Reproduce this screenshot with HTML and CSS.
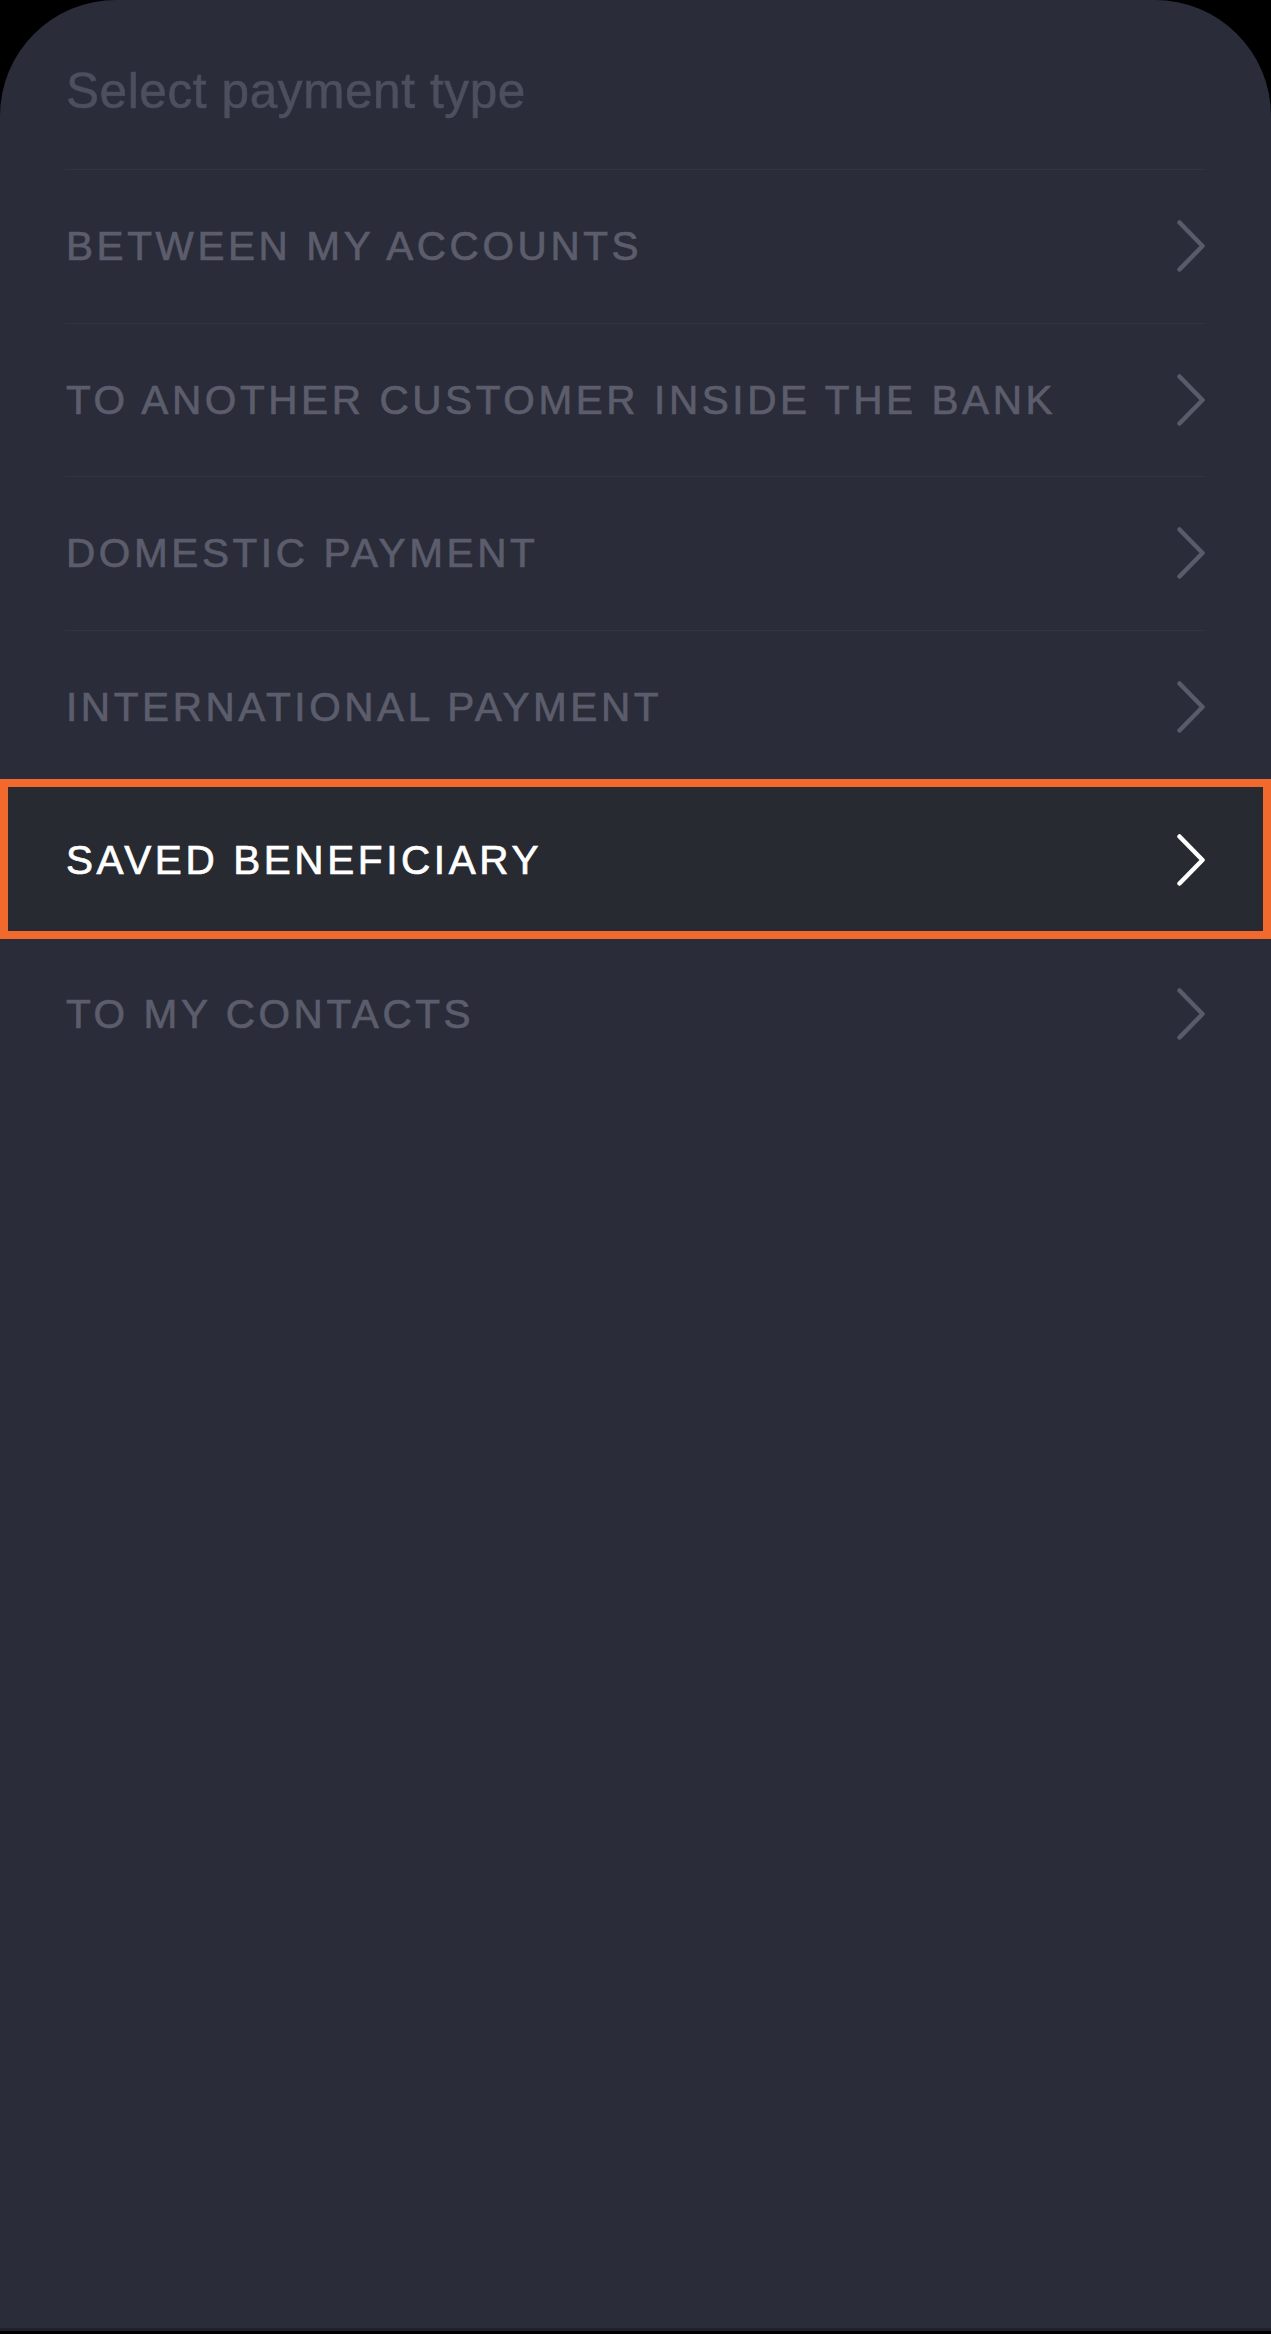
FILE: index.html
```html
<!DOCTYPE html>
<html lang="en">
<head>
<meta charset="utf-8">
<title>Select payment type</title>
<link rel="stylesheet" href="styles.css">
</head>
<body>
<main class="screen">
  <header class="sheet-header">
    <h1 class="sheet-title">Select payment type</h1>
  </header>
  <ul class="pay-list">
    <li class="pay-item">
      <span class="pay-label">BETWEEN MY ACCOUNTS</span>
      <svg class="chev" viewBox="0 0 28 52" aria-hidden="true"><polyline points="2.5,2.5 25.5,26 2.5,49.5"/></svg>
    </li>
    <li class="pay-item">
      <span class="pay-label">TO ANOTHER CUSTOMER INSIDE THE BANK</span>
      <svg class="chev" viewBox="0 0 28 52" aria-hidden="true"><polyline points="2.5,2.5 25.5,26 2.5,49.5"/></svg>
    </li>
    <li class="pay-item">
      <span class="pay-label">DOMESTIC PAYMENT</span>
      <svg class="chev" viewBox="0 0 28 52" aria-hidden="true"><polyline points="2.5,2.5 25.5,26 2.5,49.5"/></svg>
    </li>
    <li class="pay-item">
      <span class="pay-label">INTERNATIONAL PAYMENT</span>
      <svg class="chev" viewBox="0 0 28 52" aria-hidden="true"><polyline points="2.5,2.5 25.5,26 2.5,49.5"/></svg>
    </li>
    <li class="pay-item is-selected">
      <span class="pay-label">SAVED BENEFICIARY</span>
      <svg class="chev" viewBox="0 0 28 52" aria-hidden="true"><polyline points="2.5,2.5 25.5,26 2.5,49.5"/></svg>
    </li>
    <li class="pay-item is-last">
      <span class="pay-label">TO MY CONTACTS</span>
      <svg class="chev" viewBox="0 0 28 52" aria-hidden="true"><polyline points="2.5,2.5 25.5,26 2.5,49.5"/></svg>
    </li>
  </ul>
</main>
</body>
</html>
```
FILE: styles.css
```css
html, body {
  margin: 0;
  padding: 0;
  background: #000000;
}

body {
  font-family: "Liberation Sans", Arial, sans-serif;
}

.screen {
  box-sizing: border-box;
  height: 2331px;
  background: #2a2c39;
  border-radius: 116px 116px 0 0;
  overflow: hidden;
  border-bottom: 3px solid #1f2029;
}

.sheet-header {
  padding: 61px 66px 48px 66px;
}

.sheet-title {
  margin: 0;
  font-size: 49.5px;
  line-height: 60px;
  font-weight: 400;
  letter-spacing: 0.6px;
  color: #4d4e5e;
  -webkit-text-stroke: 0.6px #4d4e5e;
}

.pay-list {
  list-style: none;
  margin: 0 66px 0 65px;
  padding: 0;
  border-top: 1.5px solid #323441;
}

.pay-item {
  position: relative;
  display: flex;
  align-items: center;
  justify-content: space-between;
  height: 152.5px;
  border-bottom: 1.5px solid #323441;
}

.pay-item.is-last {
  border-bottom: none;
}

.pay-label {
  position: relative;
  z-index: 1;
  font-size: 40.5px;
  line-height: 1;
  letter-spacing: 3.6px;
  color: #5c5d6c;
  -webkit-text-stroke: 0.7px #5c5d6c;
  margin-left: 1px;
}

.chev {
  position: relative;
  z-index: 1;
  width: 28px;
  height: 52px;
  flex: none;
  fill: none;
  stroke: #5a5b6a;
  stroke-width: 4.5;
  stroke-linecap: round;
  stroke-linejoin: round;
}

.pay-item.is-selected::before {
  content: "";
  position: absolute;
  top: -5px;
  bottom: -2px;
  left: -65px;
  right: -66px;
  border: 8px solid #f2692d;
  background: #282a32;
  z-index: 0;
}

.pay-item.is-selected .pay-label {
  color: #ffffff;
  -webkit-text-stroke: 0.7px #ffffff;
}

.pay-item.is-selected .chev {
  stroke: #ffffff;
}
```
